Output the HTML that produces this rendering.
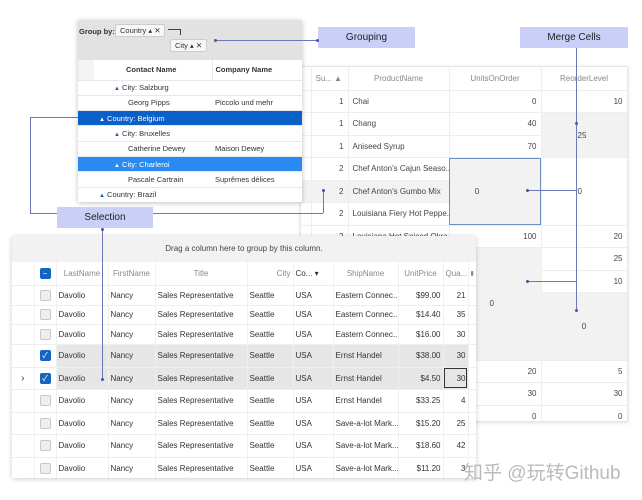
<!DOCTYPE html><html><head><meta charset="utf-8"><style>
*{margin:0;padding:0;box-sizing:border-box}
body{width:642px;height:500px;background:#fff;position:relative;overflow:hidden;font-family:"Liberation Sans","Noto Sans CJK SC",sans-serif;font-size:8px;color:#333}
.a{position:absolute}
table{border-collapse:collapse;table-layout:fixed}
td{overflow:hidden;white-space:nowrap}
#bg{left:300px;top:66px;width:328px;height:356px;overflow:hidden;border:1px solid #e6e6e6;box-shadow:0 1px 4px rgba(0,0,0,.12);background:#fff}
#bg tr{height:22.5px}
#bg td{border-bottom:1px solid #eee;border-right:1px solid #eee;padding:0 4px;color:#444}
#bg tr.h{height:23px}
#bg tr.h td{color:#888;text-align:center}
.r{text-align:right}.c{text-align:center}
.g{background:#f2f2f2}
#tg{left:78px;top:20px;width:224px;height:182px;background:#fff;box-shadow:0 1px 5px rgba(0,0,0,.25);overflow:hidden}
#tg .gp{height:40px;background:#e2e2e2;position:relative}
.chip{position:absolute;background:#f7f7f7;border:1px solid #ccc;border-radius:2px;height:13px;line-height:11px;padding:0 4px;font-size:7.5px;color:#333}
#tg td{height:15.3px;border-bottom:1px solid #e8e8e8;font-size:7.5px;padding-left:3px}
.lab{position:absolute;background:#c9cff7;color:#222;font-size:10px;text-align:center;line-height:21px;height:21px}
.ln{position:absolute;background:#6d76b6}
.dot{position:absolute;width:3px;height:3px;border-radius:50%;background:#4b559e}
#bt{left:12px;top:236px;width:464px;height:242px;background:#fff;box-shadow:0 1px 5px rgba(0,0,0,.2);overflow:hidden}
#bt td{border-bottom:1px solid #eee;border-right:1px solid #f0f0f0;padding:0 2px;color:#333}
#bt tr.h td{height:23px;color:#888;text-align:center}
.cb{display:inline-block;width:11px;height:11px;border:1px solid #c8c8c8;border-radius:2px;background:#eee;vertical-align:middle}
.cb.on{background:#1565c0;border-color:#1565c0;color:#fff;font-size:8px;line-height:9px;text-align:center}
.sel td{background:#e6e6e6}
</style></head><body>

<div id="bg" class="a"><table style="width:326px">
<colgroup><col style="width:10px"><col style="width:37px"><col style="width:101px"><col style="width:92px"><col style="width:86px"></colgroup>
<tr class="h"><td></td><td style="text-align:left">Su... ▲</td><td>ProductName</td><td>UnitsOnOrder</td><td>ReorderLevel</td></tr>
<tr><td></td><td class="r">1</td><td>Chai</td><td class="r">0</td><td class="r">10</td></tr>
<tr><td></td><td class="r">1</td><td>Chang</td><td class="r">40</td><td rowspan="2" class="g" style="text-align:left;padding-left:36px">25</td></tr>
<tr><td></td><td class="r">1</td><td>Aniseed Syrup</td><td class="r">70</td></tr>
<tr><td></td><td class="r">2</td><td>Chef Anton's Cajun Seaso...</td><td rowspan="3" class="c g" style="outline:1px solid #6c8fc4;outline-offset:-1px;padding-right:40px">0</td><td rowspan="3" style="padding-left:36px">0</td></tr>
<tr><td class="g"></td><td class="r g">2</td><td class="g">Chef Anton's Gumbo Mix</td></tr>
<tr><td></td><td class="r">2</td><td>Louisiana Fiery Hot Peppe...</td></tr>
<tr><td></td><td class="r">2</td><td>Louisiana Hot Spiced Okra</td><td class="r">100</td><td class="r">20</td></tr>
<tr><td></td><td></td><td></td><td rowspan="5" class="g" style="text-align:left;padding-left:40px">0</td><td class="r">25</td></tr>
<tr><td></td><td></td><td></td><td class="r">10</td></tr>
<tr><td></td><td></td><td></td><td rowspan="3" class="g c">0</td></tr>
<tr><td></td><td></td><td></td></tr>
<tr><td></td><td></td><td></td></tr>
<tr><td></td><td></td><td></td><td class="r">20</td><td class="r">5</td></tr>
<tr><td></td><td></td><td></td><td class="r">30</td><td class="r">30</td></tr>
<tr><td></td><td></td><td></td><td class="r">0</td><td class="r">0</td></tr>
</table></div>

<div id="tg" class="a">
<div class="gp"><div class="a" style="left:1px;top:7px;font-weight:bold;font-size:7.5px">Group by:</div>
<div class="chip" style="left:37px;top:4px">Country ▴ ✕</div>
<div class="chip" style="left:92px;top:19px">City ▴ ✕</div>
<div class="a" style="left:90px;top:9px;width:13px;height:6px;border-top:1px solid #444;border-right:1px solid #444"></div></div>
<table style="width:224px">
<colgroup><col style="width:16px"><col style="width:118px"><col style="width:90px"></colgroup>
<tr><td style="background:#f3f3f3;height:20px"></td><td style="font-weight:bold;padding-left:32px;height:20px">Contact Name</td><td style="font-weight:bold;border-left:1px solid #e8e8e8">Company Name</td></tr>
<tr><td></td><td style="padding-left:20px"><span style="color:#1a5fb4;font-size:6px">▲</span> City: Salzburg</td><td></td></tr>
<tr><td></td><td style="padding-left:34px">Georg Pipps</td><td>Piccolo und mehr</td></tr>
<tr style="background:#0b5fc8;color:#fff"><td style="color:#fff"></td><td style="color:#fff;padding-left:5px"><span style="font-size:6px">▲</span> Country: Belgium</td><td></td></tr>
<tr><td></td><td style="padding-left:20px"><span style="color:#1a5fb4;font-size:6px">▲</span> City: Bruxelles</td><td></td></tr>
<tr><td></td><td style="padding-left:34px">Catherine Dewey</td><td>Maison Dewey</td></tr>
<tr style="background:#2b8af2"><td></td><td style="color:#fff;padding-left:20px"><span style="font-size:6px">▲</span> City: Charleroi</td><td></td></tr>
<tr><td></td><td style="padding-left:34px">Pascale Cartrain</td><td>Suprêmes délices</td></tr>
<tr><td></td><td style="padding-left:5px"><span style="color:#1a5fb4;font-size:6px">▲</span> Country: Brazil</td><td></td></tr>
</table></div>

<div id="bt" class="a">
<div style="height:26px;background:#f2f2f2;text-align:center;line-height:26px;color:#444">Drag a column here to group by this column.</div>
<table style="width:464px">
<colgroup><col style="width:22px"><col style="width:22px"><col style="width:52px"><col style="width:47px"><col style="width:92px"><col style="width:46px"><col style="width:40px"><col style="width:65px"><col style="width:45px"><col style="width:25px"><col style="width:8px"></colgroup>
<tr class="h"><td></td><td><span class="cb on">−</span></td><td>LastName</td><td>FirstName</td><td>Title</td><td style="text-align:right">City</td><td style="text-align:left;color:#333">Co... ▾</td><td>ShipName</td><td>UnitPrice</td><td>Qua...</td><td style="font-size:6px">▮</td></tr>
<tr style="height:20px"><td></td><td class="c"><span class="cb"></span></td><td>Davolio</td><td>Nancy</td><td>Sales Representative</td><td>Seattle</td><td>USA</td><td>Eastern Connec...</td><td class="r">$99.00</td><td class="r">21</td><td></td></tr>
<tr style="height:19px"><td></td><td class="c"><span class="cb"></span></td><td>Davolio</td><td>Nancy</td><td>Sales Representative</td><td>Seattle</td><td>USA</td><td>Eastern Connec...</td><td class="r">$14.40</td><td class="r">35</td><td></td></tr>
<tr style="height:20px"><td></td><td class="c"><span class="cb"></span></td><td>Davolio</td><td>Nancy</td><td>Sales Representative</td><td>Seattle</td><td>USA</td><td>Eastern Connec...</td><td class="r">$16.00</td><td class="r">30</td><td></td></tr>
<tr class="sel" style="height:23px"><td style="background:#fff"></td><td class="c" style="background:#fff"><span class="cb on">✓</span></td><td>Davolio</td><td>Nancy</td><td>Sales Representative</td><td>Seattle</td><td>USA</td><td>Ernst Handel</td><td class="r">$38.00</td><td class="r">30</td><td style="background:#fff"></td></tr>
<tr class="sel" style="height:22px"><td style="background:#fff;font-size:10px" class="c">›</td><td class="c" style="background:#fff"><span class="cb on">✓</span></td><td>Davolio</td><td>Nancy</td><td>Sales Representative</td><td>Seattle</td><td>USA</td><td>Ernst Handel</td><td class="r">$4.50</td><td class="r" style="outline:1.5px solid #333;outline-offset:-2px">30</td><td style="background:#fff"></td></tr>
<tr style="height:23px"><td></td><td class="c"><span class="cb"></span></td><td>Davolio</td><td>Nancy</td><td>Sales Representative</td><td>Seattle</td><td>USA</td><td>Ernst Handel</td><td class="r">$33.25</td><td class="r">4</td><td></td></tr>
<tr style="height:22px"><td></td><td class="c"><span class="cb"></span></td><td>Davolio</td><td>Nancy</td><td>Sales Representative</td><td>Seattle</td><td>USA</td><td>Save-a-lot Mark...</td><td class="r">$15.20</td><td class="r">25</td><td></td></tr>
<tr style="height:23px"><td></td><td class="c"><span class="cb"></span></td><td>Davolio</td><td>Nancy</td><td>Sales Representative</td><td>Seattle</td><td>USA</td><td>Save-a-lot Mark...</td><td class="r">$18.60</td><td class="r">42</td><td></td></tr>
<tr style="height:22px"><td></td><td class="c"><span class="cb"></span></td><td>Davolio</td><td>Nancy</td><td>Sales Representative</td><td>Seattle</td><td>USA</td><td>Save-a-lot Mark...</td><td class="r">$11.20</td><td class="r">3</td><td></td></tr>
</table></div>

<div class="lab" style="left:318px;top:27px;width:97px">Grouping</div>
<div class="lab" style="left:520px;top:27px;width:108px">Merge Cells</div>
<div class="lab" style="left:57px;top:207px;width:96px">Selection</div>

<div class="ln" style="left:215px;top:40px;width:103px;height:1px"></div><div class="dot" style="left:214px;top:39px"></div><div class="dot" style="left:316px;top:39px"></div>
<div class="ln" style="left:576px;top:48px;width:1px;height:262px"></div><div class="dot" style="left:575px;top:122px"></div><div class="dot" style="left:575px;top:309px"></div>
<div class="ln" style="left:527px;top:190px;width:49px;height:1px"></div><div class="dot" style="left:526px;top:189px"></div>
<div class="ln" style="left:527px;top:281px;width:49px;height:1px"></div><div class="dot" style="left:526px;top:280px"></div>
<div class="ln" style="left:30px;top:117px;width:1px;height:96px"></div><div class="ln" style="left:30px;top:117px;width:48px;height:1px"></div><div class="ln" style="left:30px;top:213px;width:27px;height:1px"></div>
<div class="ln" style="left:153px;top:213px;width:170px;height:1px"></div><div class="ln" style="left:323px;top:190px;width:1px;height:23px"></div><div class="dot" style="left:322px;top:189px"></div>
<div class="ln" style="left:102px;top:228px;width:1px;height:151px"></div><div class="dot" style="left:101px;top:228px"></div><div class="dot" style="left:101px;top:378px"></div>

<div class="a" style="left:464px;top:458px;font-size:19px;color:#bbb;font-family:'Liberation Sans','Noto Sans CJK SC',sans-serif">知乎 @玩转Github</div>
</body></html>
